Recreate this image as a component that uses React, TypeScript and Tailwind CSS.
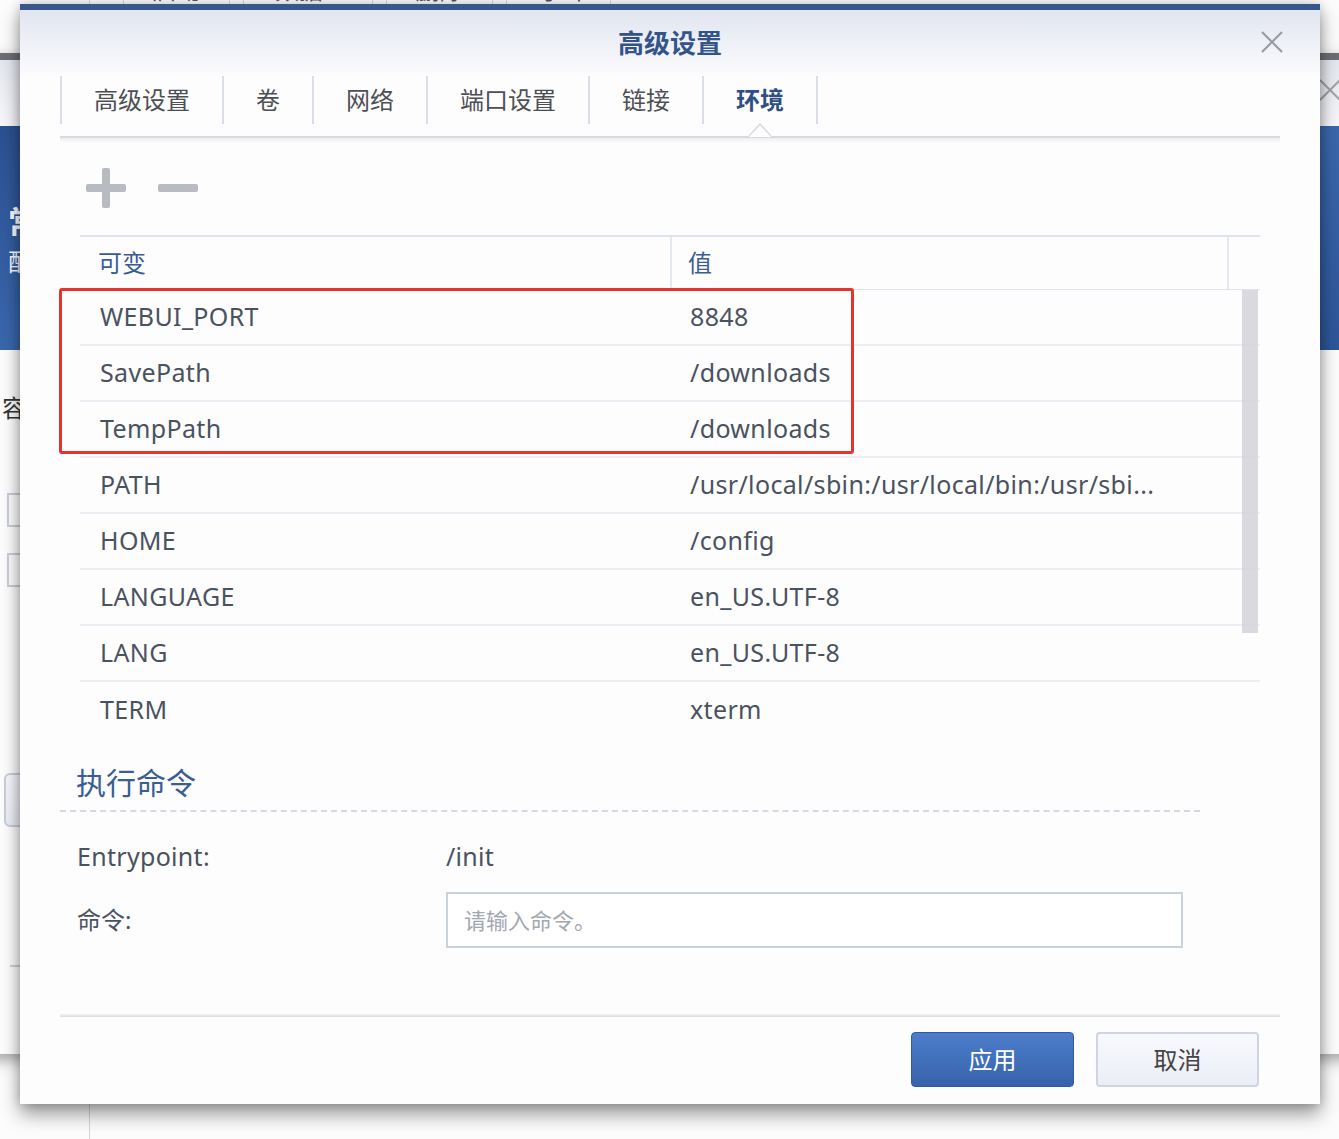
const rows: [string, string][] = [
  ['WEBUI_PORT', '8848'],
  ['SavePath', '/downloads'],
  ['TempPath', '/downloads'],
  ['PATH', '/usr/local/sbin:/usr/local/bin:/usr/sbi...'],
  ['HOME', '/config'],
  ['LANGUAGE', 'en_US.UTF-8'],
  ['LANG', 'en_US.UTF-8'],
  ['TERM', 'xterm'],
]

const tabs = ['高级设置', '卷', '网络', '端口设置', '链接', '环境']

const toolbarButtons = [
  { label: '启动', w: 'w-[107px]' },
  { label: '数据 ▾', w: 'w-[130px]' },
  { label: '删除', w: 'w-[107px]' },
  { label: '导出', w: 'w-[105px]' },
]

function CloseIcon({ className }: { className?: string }) {
  return (
    <svg viewBox="0 0 24 24" className={className} fill="none" stroke="currentColor" strokeWidth="2.2">
      <path d="M2 2 L22 22 M22 2 L2 22" />
    </svg>
  )
}

function BackgroundWindow() {
  return (
    <>
      {/* container list toolbar, mostly hidden above the fold */}
      <div className="absolute left-[89px] top-[-26px] flex h-[30px] gap-[13px] border-l border-[#d3d7e0] pl-[33px]">
        {toolbarButtons.map((b) => (
          <div
            key={b.label}
            className={`${b.w} flex h-[30px] items-end justify-center border-x border-[#d3d7e0] text-[24px] leading-[28px] text-[#555]`}
          >
            {b.label}
          </div>
        ))}
      </div>

      {/* container settings window behind the dialog */}
      <div className="absolute left-[-40px] top-[53px] flex h-[1001px] w-[1420px] flex-col bg-[#fdfdfe] shadow-[0_6px_14px_rgba(0,0,0,0.35)]">
        <div className="h-[7px] bg-[#6e6f74]" />
        <div className="relative h-[66px] bg-gradient-to-b from-[#e4e7ef] to-[#f8f8fb]">
          <CloseIcon className="absolute right-[38px] top-[18px] h-[24px] w-[24px] text-[#a3a4aa]" />
        </div>
        <div className="flex h-[224px] flex-col bg-gradient-to-br from-[#2b5091] via-[#3a67ad] to-[#2d5597] pl-[48px] pt-[76px] text-white">
          <div className="text-[32px] font-bold leading-[40px]">常规</div>
          <div className="mt-[4px] text-[24px] leading-[32px]">配置</div>
        </div>
        <div className="flex flex-col pl-[42px]">
          <div className="mt-[42px] text-[24px] leading-[32px] text-[#333]">容器</div>
          <div className="ml-[5px] mt-[69px] h-[34px] w-[300px] border-2 border-[#c9ced9]" />
          <div className="ml-[5px] mt-[26px] h-[34px] w-[300px] border-2 border-[#c9ced9]" />
          <div className="ml-[2px] mt-[186px] h-[54px] w-[150px] rounded-[6px] border-2 border-[#c9ced9] bg-gradient-to-b from-[#f7f8fc] to-[#eceef6]" />
          <div className="ml-[8px] mt-[138px] h-[2px] w-[400px] bg-[#cfd1d6]" />
        </div>
      </div>

      <div className="absolute left-[89px] top-[1104px] h-[40px] w-px bg-[#d4d4d8]" />
    </>
  )
}

function PlusMinus() {
  return (
    <div className="ml-[66px] mt-[30px] flex h-[40px] items-center gap-[32px]">
      <svg viewBox="0 0 40 40" className="h-[40px] w-[40px]" fill="#b9bbc3">
        <rect x="0" y="16" width="40" height="8" rx="2" />
        <rect x="16" y="0" width="8" height="40" rx="2" />
      </svg>
      <svg viewBox="0 0 40 8" className="h-[8px] w-[40px]" fill="#b9bbc3">
        <rect x="0" y="0" width="40" height="8" rx="2" />
      </svg>
    </div>
  )
}

function EnvTable() {
  return (
    <div className="mx-[60px] mt-[27px]">
      <div className="flex h-[55px] border-b border-t-2 border-[#dfe3ef] text-[24px] text-[#3b5c93]">
        <div className="flex w-[590px] items-center pl-[18px]">可变</div>
        <div className="flex w-[557px] items-center border-l-2 border-[#e4e8f2] pl-[16px]">值</div>
        <div className="flex-1 border-l-2 border-[#e4e8f2]" />
      </div>
      <div className="relative">
        {rows.map(([name, value], i) => (
          <div
            key={name}
            className={`flex h-[56px] items-center text-[25px] tracking-[0.35px] text-[#4a5260] ${
              i < rows.length - 1 ? 'border-b-2 border-[#eceef4]' : ''
            }`}
          >
            <div className="w-[590px] pl-[20px]">{name}</div>
            <div className="pl-[20px]">{value}</div>
          </div>
        ))}
        {/* scrollbar */}
        <div className="absolute right-[2px] top-0 h-[343px] w-[16px] bg-[#d5d5db]/90" />
        {/* highlight box */}
        <div className="absolute left-[-21px] top-[-2px] h-[166px] w-[795px] rounded-[3px] border-[3px] border-[#e5342b]" />
      </div>
    </div>
  )
}

export default function App() {
  return (
    <div className="relative h-[1139px] w-[1339px] overflow-hidden bg-[#fcfcfd] font-['Noto_Sans','Noto_Sans_CJK_SC',sans-serif]">
      <BackgroundWindow />

      <div className="absolute left-[20px] top-[4px] flex h-[1100px] w-[1300px] flex-col border-t-[6px] border-[#38578a] bg-[#fdfdfe] shadow-[0_10px_18px_rgba(0,0,0,0.4),0_0_10px_rgba(0,0,0,0.18)]">
        {/* Header */}
        <div className="relative flex h-[66px] items-center justify-center bg-gradient-to-b from-[#e1e5ef] to-[#fcfcfe]">
          <h1 className="text-[26px] font-bold text-[#33548b]">高级设置</h1>
          <CloseIcon className="absolute right-[36px] top-[20px] h-[24px] w-[24px] text-[#9b9ca2]" />
        </div>

        {/* Tabs */}
        <div className="mx-[40px] flex h-[48px]">
          {tabs.map((t, i) => (
            <div
              key={t}
              className={`flex items-center border-l-2 border-[#d9deea] px-[32px] text-[24px] ${
                i === tabs.length - 1 ? 'border-r-2 font-bold text-[#2f4f84]' : 'text-[#4d4f55]'
              }`}
            >
              {t}
            </div>
          ))}
        </div>
        <div className="relative mx-[40px] mt-[12px] h-[2px] bg-[#d9dade]">
          <div className="absolute left-0 right-0 top-[2px] h-[5px] bg-gradient-to-b from-[#eeeef2] to-transparent" />
          <svg viewBox="0 0 22 14" className="absolute left-[689px] top-[-13px] h-[14px] w-[22px]">
            <path d="M0 14 L11 1 L22 14 Z" fill="#fdfdfe" />
            <path d="M0 13 L11 1 L22 13" fill="none" stroke="#d9dade" strokeWidth="1.5" />
          </svg>
        </div>

        <PlusMinus />
        <EnvTable />

        {/* Execute command */}
        <div className="ml-[56px] mt-[27px] text-[30px] leading-[36px] text-[#3a5d96]">执行命令</div>
        <div className="ml-[40px] mt-[9px] w-[1140px] border-t-2 border-dashed border-[#d5d9e6]" />

        <div className="mt-[25px] flex h-[40px] items-center text-[25px] tracking-[0.3px] text-[#4a5260]">
          <div className="w-[426px] pl-[57px]">Entrypoint:</div>
          <div>/init</div>
        </div>
        <div className="mt-[15px] flex items-center">
          <div className="w-[426px] pl-[57px] text-[24px] text-[#4a5260]">命令:</div>
          <input
            placeholder="请输入命令。"
            className="h-[56px] w-[737px] border-2 border-[#c9d0de] bg-white px-[16px] text-[22px] text-[#4a5260] outline-none placeholder:text-[#a3a7b0]"
          />
        </div>

        {/* Footer */}
        <div className="mx-[40px] mt-[66px] h-[3px] bg-gradient-to-b from-[#f3f3f6] to-[#dcdde3]" />
        <div className="mr-[61px] mt-[15px] flex justify-end gap-[22px]">
          <button className="h-[55px] w-[163px] rounded-[4px] border border-[#2f5a9e] bg-gradient-to-b from-[#4c7dc9] to-[#3763ab] text-[24px] text-white">
            应用
          </button>
          <button className="h-[55px] w-[163px] rounded-[4px] border-2 border-[#cfd4e2] bg-gradient-to-b from-[#f8f9fd] to-[#eceef7] text-[24px] text-[#444]">
            取消
          </button>
        </div>
      </div>
    </div>
  )
}
